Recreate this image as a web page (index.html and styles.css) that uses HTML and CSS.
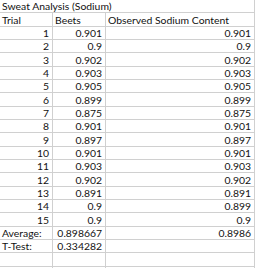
FILE: index.html
```html
<!DOCTYPE html>
<html>
<head>
<meta charset="utf-8">
<link rel="stylesheet" href="styles.css">
</head>
<body>
<div class="sheet">
  <div class="cell title span3">Sweat Analysis (Sodium)</div>
  <div class="cell gap"></div>

  <div class="cell">Trial</div>
  <div class="cell">Beets</div>
  <div class="cell">Observed Sodium Content</div>
  <div class="cell gap"></div>

  <div class="cell num">1</div><div class="cell num">0.901</div><div class="cell num">0.901</div><div class="cell gap"></div>
  <div class="cell num">2</div><div class="cell num">0.9</div><div class="cell num">0.9</div><div class="cell gap"></div>
  <div class="cell num">3</div><div class="cell num">0.902</div><div class="cell num">0.902</div><div class="cell gap"></div>
  <div class="cell num">4</div><div class="cell num">0.903</div><div class="cell num">0.903</div><div class="cell gap"></div>
  <div class="cell num">5</div><div class="cell num">0.905</div><div class="cell num">0.905</div><div class="cell gap"></div>
  <div class="cell num">6</div><div class="cell num">0.899</div><div class="cell num">0.899</div><div class="cell gap"></div>
  <div class="cell num">7</div><div class="cell num">0.875</div><div class="cell num">0.875</div><div class="cell gap"></div>
  <div class="cell num">8</div><div class="cell num">0.901</div><div class="cell num">0.901</div><div class="cell gap"></div>
  <div class="cell num">9</div><div class="cell num">0.897</div><div class="cell num">0.897</div><div class="cell gap"></div>
  <div class="cell num">10</div><div class="cell num">0.901</div><div class="cell num">0.901</div><div class="cell gap"></div>
  <div class="cell num">11</div><div class="cell num">0.903</div><div class="cell num">0.903</div><div class="cell gap"></div>
  <div class="cell num">12</div><div class="cell num">0.902</div><div class="cell num">0.902</div><div class="cell gap"></div>
  <div class="cell num">13</div><div class="cell num">0.891</div><div class="cell num">0.891</div><div class="cell gap"></div>
  <div class="cell num">14</div><div class="cell num">0.9</div><div class="cell num">0.899</div><div class="cell gap"></div>
  <div class="cell num">15</div><div class="cell num">0.9</div><div class="cell num">0.9</div><div class="cell gap"></div>

  <div class="cell">Average:</div><div class="cell num">0.898667</div><div class="cell num">0.8986</div><div class="cell gap"></div>
  <div class="cell">T-Test:</div><div class="cell num">0.334282</div><div class="cell"></div><div class="cell gap"></div>
  <div class="cell"></div><div class="cell"></div><div class="cell"></div><div class="cell gap"></div>
  <div class="cell"></div><div class="cell"></div><div class="cell"></div><div class="cell gap"></div>
</div>
</body>
</html>
```
FILE: styles.css
```css
html, body {
  margin: 0;
  padding: 0;
  background: #ffffff;
  overflow: hidden;
}

.sheet {
  display: grid;
  grid-template-columns: 53px 53px 149px 3px;
  grid-auto-rows: 13.333px;
  font-family: "Lato", "Liberation Sans", sans-serif;
  font-size: 10.4px;
  color: #111;
}

.cell {
  box-sizing: border-box;
  border-right: 1px solid #d0d0d0;
  border-bottom: 1px solid #d0d0d0;
  padding: 0 2px 0 2px;
  display: flex;
  align-items: flex-end;
  line-height: 12px;
  white-space: nowrap;
  overflow: visible;
}

.num {
  justify-content: flex-end;
  padding-right: 3px;
}

.span3 {
  grid-column: 1 / span 3;
}

.gap {
  border-right: none;
  border-bottom: none;
}
```
